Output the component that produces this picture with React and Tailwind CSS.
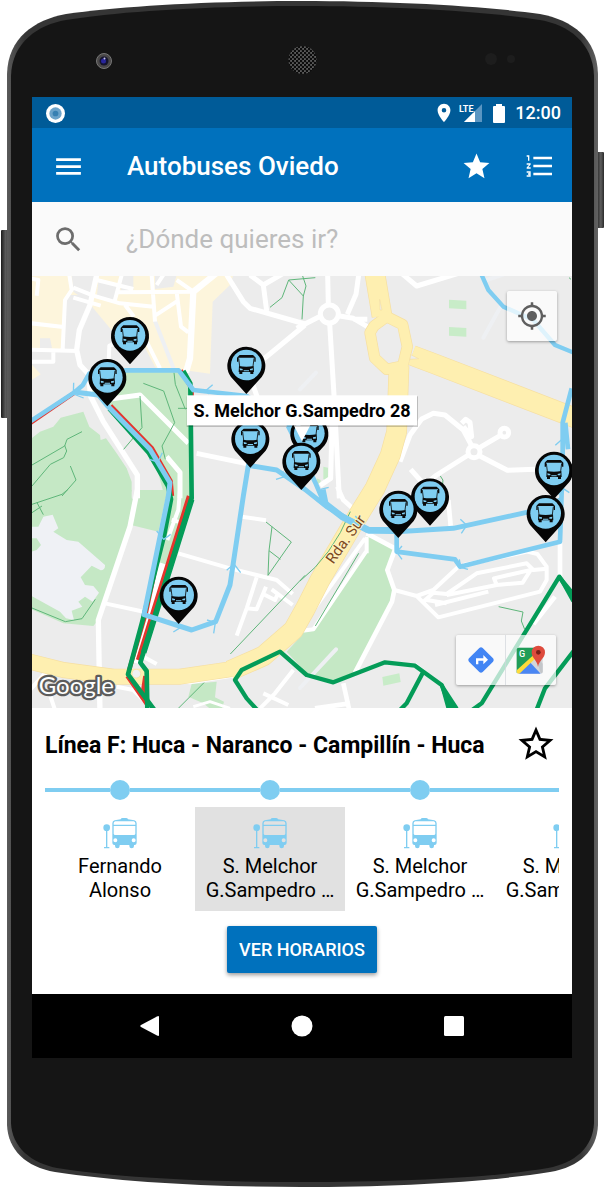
import React from "react";
import { MdMenu, MdStar, MdFormatListNumbered, MdSearch, MdPlace, MdMyLocation, MdStarBorder } from "react-icons/md";

const BLUE = "#7fcdf1";
const GREEN = "#049c58";

const stops = [
  { id: 1, name: "Fernando Alonso" },
  { id: 2, name: "S. Melchor G.Sampedro …" },
  { id: 3, name: "S. Melchor G.Sampedro …" },
  { id: 4, name: "S. Melchor G.Sampedro …" },
];

const pins = [
  [294, 178], [226, 304], [643, 267], [832, 472], [655, 488], [808, 555],
  [1194, 662], [1099, 699], [1566, 582], [1541, 712], [440, 957],
];

function PhoneBody() {
  return (
    <svg className="absolute inset-0 h-full w-full" viewBox="0 0 605 1188" preserveAspectRatio="none" aria-hidden="true">
      <defs>
        <linearGradient id="rim" x1="0" x2="1" y1="0" y2="0">
          <stop offset="0" stopColor="#5a5a5a" />
          <stop offset="0.03" stopColor="#353535" />
          <stop offset="0.97" stopColor="#353535" />
          <stop offset="1" stopColor="#626262" />
        </linearGradient>
        <linearGradient id="sideKey" x1="0" x2="1" y1="0" y2="0">
          <stop offset="0" stopColor="#1b1b1b" />
          <stop offset="0.6" stopColor="#5e5e5e" />
          <stop offset="1" stopColor="#2a2a2a" />
        </linearGradient>
        <pattern id="mesh" width="4" height="4" patternUnits="userSpaceOnUse">
          <rect width="4" height="4" fill="#5b5b5b" />
          <circle cx="1" cy="1" r="1.300" fill="#0c0c0c" />
          <circle cx="3" cy="3" r="1.300" fill="#0c0c0c" />
        </pattern>
      </defs>
      <rect x="1" y="230" width="8" height="188" rx="1" fill="url(#sideKey)" />
      <rect x="596" y="152" width="8" height="76" rx="1" fill="url(#sideKey)" />
      <path d="M301 1C210 1 120 6 66 14C34 20 8 38 7 74V1125C8 1150 26 1167 55 1172C120 1182 210 1187 301 1187S490 1182 550 1172C580 1167 597 1150 598 1125V74C597 38 572 20 540 14C484 6 392 1 301 1Z" fill="url(#rim)" />
      <path d="M301 6C210 6 120 11 66 20C38 25 12 42 11 76V1123C12 1147 31 1163 57 1168C120 1178 210 1182 301 1182S490 1178 548 1168C575 1163 593 1147 594 1123V76C593 42 568 25 540 20C484 11 392 6 301 6Z" fill="#151515" />
      <circle cx="104" cy="61" r="7.500" fill="#4a4848" stroke="#777" strokeWidth="1" />
      <circle cx="104" cy="61" r="4.500" fill="#15142e" />
      <circle cx="103.500" cy="61" r="2.500" fill="#28259a" />
      <circle cx="104.500" cy="58.500" r="1" fill="#c9c9f0" />
      <circle cx="302.500" cy="60" r="14" fill="url(#mesh)" />
      <circle cx="491" cy="59" r="6" fill="#1d1d1d" />
      <circle cx="511" cy="59" r="4" fill="#1d1d1d" />
    </svg>
  );
}

function Pin({ x, y }) {
  return (
    <g transform={`translate(${x} ${y})`}>
      <path d="M0 87L-46 36A57 57 0 1 1 46 36Z" fill="#050505" />
      <circle r="46" fill={BLUE} />
      <path d="M-20 -30H20Q24 -26 28 -22V-10H24V-22H-24V-10H-28V-22Q-24 -26 -20 -30Z" fill="#0b0b0b" />
      <path d="M-23 -20L-20 4M23 -20L20 4" stroke="#0b0b0b" strokeWidth="2.500" />
      <path d="M-22 3Q0 7 22 3L23 21H21V27H12V21H-12V27H-21V21H-23Z" fill="#0b0b0b" />
      <path d="M-20 10L-11 12V16H-19ZM20 10L11 12V16H19ZM-8 16H8V19H-8Z" fill={BLUE} />
    </g>
  );
}

function CityMap() {
  return (
    <svg className="block h-full w-full" viewBox="0 0 1620 1296" preserveAspectRatio="xMidYMid slice" role="img" aria-label="Mapa de paradas">
      <rect width="1620" height="1296" fill="#ececec" />

      {/* built-up areas and parks */}
      <g transform="translate(-6 -3)">
        <path d="M5 0H610L600 30L548 80L540 296L460 285H390L300 230L240 160L190 100L165 60H110L100 220L70 230L5 225Z" fill="#fdf5dc" />
        <path d="M125 0H195L180 85L130 50ZM205 20L262 25L252 80L200 70ZM275 0H310V45L272 50ZM375 0H440L430 35L375 42ZM30 190H60L66 220H30ZM240 215L330 190L380 285H240Z" fill="#ececec" />
        <path d="M5 268L32 298L5 315Z" fill="#fdf5dc" />
        <path d="M180 290H450L482 340L485 670H405L370 540L240 390L170 350Z" fill="#c5e8c5" />
        <path d="M5 490L30 470L70 455L92 428L160 410L178 455L210 480L212 495L228 490L260 535L290 580L305 620V670H5Z" fill="#c5e8c5" />
      </g>
      <g transform="translate(804 -3)">
        <path d="M447 74L499 77V103L447 100ZM447 156L499 159V185L447 182Z" fill="#c8ecc8" />
        <path d="M70 575L84 578V620L70 612ZM50 610L62 615V628L50 626Z" fill="#c8ecc8" />
      </g>
      <g transform="translate(-6 642)">
        <path d="M5 0H305L300 20L318 35L300 105L240 280L205 390L190 408L100 400L5 358Z" fill="#c5e8c5" />
        <path d="M320 0H412L385 125L303 105ZM430 0H480L400 250L345 350Z" fill="#c5e8c5" />
        <path d="M5 110H25L40 80L68 74L85 115L70 125L110 150L145 155L225 225Q226 240 212 241L185 227L152 262L165 285L190 288L207 308L188 335L165 320L145 335L157 350L125 362L132 390L108 385L90 365L5 318V185L20 180L33 165L20 145H5Z" fill="#eff1f5" />
        <path d="M485 582L560 575L555 622L582 635L575 660H545L520 640L475 620Z" fill="#c5e8c5" />
        <path d="M825 425L770 485L825 545Z" fill="#c5e8c5" />
      </g>
      <g transform="translate(804 642)">
        <path d="M200 135L285 180L260 240L282 300L272 350L165 545L95 575L0 545V430L40 415L200 190Z" fill="#c5e8c5" />
        <path d="M247 561L298 550L302 576L250 587Z" fill="#c8ecc8" />
      </g>

      {/* minor roads */}
      <g fill="none" stroke="#eef0f3" strokeWidth="12" strokeLinecap="round">
        <path d="M369 135L424 275M1354 185L1404 95M1364 12L1424 -8M804 340L852 290M804 1236L912 1120" />
      </g>
      <g fill="none" stroke="#fff" strokeLinejoin="round">
        <g transform="translate(-6 -3)" strokeWidth="12">
          <path d="M118 0L125 45L105 75L98 222M130 38L190 62L270 85L370 95M130 68L212 92M200 15L310 42M275 0L254 78M262 52L490 50M365 0L375 140M375 122L445 76M440 52L453 155L475 172M285 90L312 125M0 10L25 15L20 62M5 145L100 156M5 224L145 228M70 230V260H5M235 285L238 212L335 180M350 200L390 280M400 0L380 30M490 50L440 15" />
          <path d="M200 0L180 90L148 165L140 225L150 270L178 300L180 360L220 440L322 600V670" strokeWidth="16" />
          <path d="M565 -10L490 50L480 250L468 292" strokeWidth="19" />
          <path d="M590 0L640 80L660 100L825 147M660 0L700 30L710 108M700 30L760 -5M825 150L655 290L690 390M240 372L330 360L475 505M500 535L660 568M410 545L450 592V670" strokeWidth="15" />
        </g>
        <g transform="translate(804 -3)" strokeWidth="15">
          <path d="M83 0L85 90M89 145L102 360L118 670M96 450L92 610L60 632M-10 160L62 123M176 0L168 58L142 118M115 122L160 130L202 155M202 133H160M305 -5L350 33L485 -8" />
          <circle cx="88" cy="117" r="27" />
          <path d="M300 560L330 480L365 432L400 415L435 420L490 465L518 518M540 517L600 482M505 540L410 600L370 632M332 583L362 617M538 542L622 586L705 583M485 445L497 433L510 442L515 485L490 455" />
          <circle cx="522" cy="530" r="18" />
          <circle cx="613" cy="473" r="13" />
        </g>
        <g transform="translate(-6 642)" strokeWidth="12">
          <path d="M322 0L300 110L205 390L210 670" strokeWidth="16" />
          <path d="M635 80L708 91M445 190L600 235L740 270L788 312M225 340L345 366M680 262L650 355L620 437M650 355L680 358L708 290M695 310L735 330L745 308M788 345L725 298M450 0L445 60L430 100L412 150M425 90L445 95M340 500L380 522M0 600L50 545M55 600L75 660M790 540L735 610L690 655M700 610L775 645M260 590L310 600L370 660" />
          <path d="M370 568L480 578L610 558M490 650L540 635L600 655" strokeWidth="9" />
          <path d="M398 220L350 370L320 520" strokeWidth="22" />
        </g>
        <g transform="translate(804 642)" strokeWidth="12">
          <path d="M112 -10L130 30L175 70M200 130L286 176L262 240L283 300L276 335L165 548M130 580L150 670M45 655L150 640M445 30L452 108" strokeWidth="14" />
          <path d="M195 145L15 395M198 185L40 418L8 422M200 140V190" />
          <path d="M283 300L350 318L400 300L475 230M350 318L415 382L720 305L740 270V230L712 192L682 185L490 225M370 335L400 308L440 312L530 250L680 220L700 240L740 236M440 315L590 285L582 265L700 238M590 285L668 278L692 240M405 345L565 305M380 330L440 340" />
          <path d="M780 150V262M765 320L700 402M370 545L345 525" strokeWidth="14" />
        </g>
      </g>

      {/* main roads */}
      {[["#f6dfa2", 4], ["#feefb0", 0]].map(([color, extra]) => (
        <g key={color} fill="none" stroke={color} strokeLinejoin="round">
          <path strokeWidth={44 + extra} d="M-10 1156L94 1182L244 1202L444 1202L594 1180L694 1140" />
          <path strokeWidth={58 + extra} d="M594 1184L694 1140L784 1062L819 1000L864 912L964 742L1029 637L1075 537L1094 467L1101 270" />
          <path strokeWidth={58 + extra} d="M1029 -5L1050 120M1140 238L1204 262L1640 430" />
          <path strokeWidth={30 + extra} d="M1026 150L1064 122L1112 146L1126 212L1112 270L1064 280L1028 246L1014 170Z" />
        </g>
      ))}
      <path d="M1136 236L1160 248L1134 250ZM1043 70L1050 102H1044Z" fill="#ececec" stroke="#f6dfa2" strokeWidth="2" />
      <circle cx="313" cy="1193" r="13" fill="#f1f1f1" stroke="#f6dfa2" strokeWidth="2" />

      {/* footpaths */}
      <g fill="none" stroke="#5fb67a" strokeWidth="3">
        <path d="M334 322L395 345L428 440L390 510L400 550M324 360L330 455L275 520M426 290L430 325L460 400M438 397H465M0 567L98 510L105 490L150 467M0 630L55 565L95 545L104 525L98 508M115 570L132 612L90 660" />
        <path d="M714 94L750 65L770 12L814 60L810 130M770 12L850 5M814 60L822 30L812 0M1611 5L1617 10" />
        <path d="M0 685L90 655L108 640M0 710L30 690M15 680L34 716M0 996L100 1037L150 1028L190 970M702 738L778 798L708 898L711 824L745 850M720 752L711 824M819 898L595 1134M516 1220L440 1296M804 915Q900 840 955 707M980 832L850 1050M1400 992L1473 1008L1468 1035L1478 1060M1225 600Q1237 612 1232 625" />
      </g>

      {/* bus routes */}
      <g fill="none" strokeLinejoin="round">
        <g stroke="#e5352d" strokeWidth="13">
          <path d="M-4 440L126 351" />
          <path d="M236 389L360 517L416 615L420 660" />
          <path d="M395 760L342 1010L292 1180M286 1200L345 1285" />
          <path d="M471 660L318 1152M340 1200L334 1240L346 1270" />
          <path d="M446 283L479 338V400" />
        </g>
        <g stroke={GREEN} strokeWidth="14">
          <path d="M232 398L350 530L408 630L417 670L396 780L330 1040L288 1195L366 1300" />
          <path d="M454 285L475 322L479 667L325 1160L344 1185L346 1296" />
          <path d="M479 670L385 970L335 1130" strokeWidth="17" />
          <path d="M674 1300L644 1267L609 1212L629 1182L744 1127L824 1197L904 1219L1059 1159L1149 1169L1229 1227L1262 1310M1174 1187L1124 1282L1100 1306M1315 1306L1349 1282L1582 902L1625 965M1512 1306L1539 1237L1625 1125" strokeWidth="13" />
          <path d="M1582 902L1622 950V974ZM1229 1227L1248 1296H1274Z" fill={GREEN} strokeWidth="10" />
        </g>
        <g stroke={BLUE} strokeWidth="14">
          <path d="M-8 438L126 350L152 328L172 293L284 283H440L484 342L644 360L760 430L804 495" />
          <path d="M126 348L200 357L224 387L354 520L414 620L409 660L336 1016L479 1062L551 1037L594 927L634 660L649 568L734 582L819 640L884 692L1004 762L1094 767L1264 757L1494 707L1590 670" strokeWidth="15" />
          <path d="M860 668L930 722L1010 763H1100" strokeWidth="20" />
          <path d="M1094 770V827L1269 850L1284 872L1584 797L1586 740L1592 560V440L1619 337M1600 440L1608 520M768 450L804 520L850 620L880 690M874 640L884 690" />
          <path d="M1349 -3L1369 42L1414 92L1504 132L1569 207L1625 230" strokeWidth="13" />
          <path d="M125 320L124 354L155 366M542 326L520 345L532 354M352 550L378 558L391 530M732 610L758 602L752 585M374 765L395 790L416 775M424 1068L450 1052L430 1040M525 1032L550 1040L545 1072M584 883L606 864L626 890M970 720L992 748L965 752M1285 730L1304 748L1288 772M1110 810L1094 828L1110 850M1282 850L1286 874L1308 880M1570 508L1592 488L1612 508M1578 655L1594 638L1612 650M866 640L890 634" strokeWidth="4" />
        </g>
      </g>

      <text transform="translate(904 866) rotate(-54)" className="font-['Roboto']" fontSize="45" fill="#7d4a1e" stroke="#fff3c4" strokeWidth="5" paintOrder="stroke">
        Rda. Sur
      </text>

      {pins.map(([x, y]) => (
        <Pin key={`${x}-${y}`} x={x} y={y} />
      ))}

      <path d="M785 448L810 496L835 448Z" fill="#fff" />
      <rect x="464" y="361" width="694" height="92" fill="#000" opacity="0.2" />
      <rect x="465" y="358" width="690" height="90" fill="#fff" />
      <text x="810" y="424" textAnchor="middle" className="font-['Roboto'] font-bold" fontSize="54" fill="#000">
        S. Melchor G.Sampedro 28
      </text>

      <text x="20" y="1254" className="font-['Lato']" fontSize="72" fill="#fff" stroke="#5c5c5c" strokeWidth="14" strokeLinejoin="round" paintOrder="stroke">
        Google
      </text>
    </svg>
  );
}

function StopIcon() {
  return (
    <svg width="34" height="31" viewBox="0 0 102 93" fill={BLUE} aria-hidden="true">
      <circle cx="11" cy="29" r="10" />
      <path d="M9 36H13V87H19V91H3V87H9Z" />
      <path fillRule="evenodd" d="M53 4Q54 0 59 0H69Q74 0 75 4L94 7Q101 9 101 16V74Q101 80 96 81H93V84Q93 91 86 91Q79 91 79 84V81H50V84Q50 91 43 91Q36 91 36 84V81H33Q28 80 28 74V16Q28 9 35 7ZM37 10Q32 11 32 16V20H97V16Q97 11 92 10ZM32 24V47Q32 51 37 51H92Q97 51 97 47V24ZM37 61A6 6 0 1 0 37 73A6 6 0 1 0 37 61ZM92 61A6 6 0 1 0 92 73A6 6 0 1 0 92 61Z" />
    </svg>
  );
}

function StatusBar() {
  return (
    <div className="flex h-[31px] items-center bg-[#005b98] pt-px pr-[11px] pl-3.5 text-white">
      <svg width="19" height="19" viewBox="0 0 20 20" aria-hidden="true">
        <circle cx="10" cy="10" r="10" fill="#fff" />
        <circle cx="10" cy="10" r="6.500" fill="#6ba3ca" />
        <circle cx="10" cy="10" r="3" fill="#3780b2" />
      </svg>
      <div className="ml-auto flex items-center">
        <MdPlace size={22} />
        <svg className="ml-1" width="24" height="20" viewBox="0 0 24 20" aria-hidden="true">
          <path d="M23 1V19H5Z" fill="#5b96c2" />
          <path d="M16 8V19H5Z" fill="#fff" />
          <text x="0" y="9" className="font-['Roboto'] font-bold" fontSize="9" stroke="#005b98" strokeWidth="1" paintOrder="stroke" fill="#fff">LTE</text>
        </svg>
        <svg className="ml-2.5" width="12" height="19" viewBox="0 0 12 19" fill="#fff" aria-hidden="true">
          <path d="M3 0H9V2H11Q12 2 12 3V18Q12 19 11 19H1Q0 19 0 18V3Q0 2 1 2H3Z" />
        </svg>
        <span className="ml-2.5 text-[18px] leading-6 font-medium">12:00</span>
      </div>
    </div>
  );
}

export default function App() {
  const [selected, setSelected] = React.useState(2);
  return (
    <div className="relative min-h-screen bg-white pt-[97px] pr-[33px] pb-[130px] pl-8 font-['Roboto',sans-serif]">
      <PhoneBody />
      <main className="relative flex flex-col overflow-hidden bg-white">
        <StatusBar />
        <header className="flex h-[74px] items-center bg-[#0071bd] pt-0.5 pr-4 pl-5 text-white">
          <button type="button" aria-label="Menú"><MdMenu size={33} /></button>
          <h1 className="ml-[42px] flex-1 text-[26px] font-medium">Autobuses Oviedo</h1>
          <button type="button" aria-label="Favoritos"><MdStar size={31} /></button>
          <button type="button" aria-label="Líneas" className="ml-8"><MdFormatListNumbered size={32} /></button>
        </header>
        <div className="flex h-[74px] items-center bg-[#fafafa] pr-4 pl-5">
          <label htmlFor="destino" aria-label="Buscar destino" className="text-[#6d6d6d]"><MdSearch size={33} /></label>
          <input id="destino" type="text" placeholder="¿Dónde quieres ir?" className="ml-[41px] min-w-0 flex-1 bg-transparent text-[26px] text-gray-800 outline-none placeholder:text-[#bdbdbd]" />
        </div>

        <section className="relative h-[432px]">
          <CityMap />
          <button type="button" aria-label="Mi ubicación" className="absolute top-[15px] right-[15px] flex size-[50px] items-center justify-center rounded-xs bg-white/75 text-[#5f5f5f] shadow-[0_1px_3px_rgba(0,0,0,0.35)]">
            <MdMyLocation size={30} />
          </button>
          <div className="absolute right-4 bottom-[23px] flex rounded-xs bg-white/70 shadow-[0_1px_3px_rgba(0,0,0,0.35)]">
            <a href="#ruta" aria-label="Cómo llegar" className="flex size-[50px] items-center justify-center border-r border-gray-300/70">
              <svg width="26" height="26" viewBox="0 0 78 78" aria-hidden="true">
                <path d="M34 3Q39 -1 44 3L75 34Q79 39 75 44L44 75Q39 79 34 75L3 44Q-1 39 3 34Z" fill="#4285f4" />
                <path d="M24 52V34H46V24L60 38L46 52V41H31V52Z" fill="#fff" />
              </svg>
            </a>
            <a href="#maps" aria-label="Abrir Google Maps" className="flex size-[50px] items-center justify-center">
              <svg width="30" height="30" viewBox="0 0 90 90" aria-hidden="true">
                <path d="M8 8H72L80 16V80L72 86H8Q2 86 2 80V14Q2 8 8 8Z" fill="#d4d7da" />
                <path d="M8 8H60V32L2 84V14Q2 8 8 8Z" fill="#1f9d58" />
                <path d="M58 30L80 56V82Q80 86 74 85Z" fill="#c3c6ca" />
                <path d="M8 86L42 52L74 86Z" fill="#4a86f3" />
                <path d="M2 76L55 28L62 37L10 86Q2 86 2 80Z" fill="#fddb3a" />
                <path d="M66 66C64 46 47 40 47 22A20 20 0 0 1 87 22C87 40 69 46 66 66Z" fill="#de4b3d" />
                <circle cx="67" cy="22" r="7" fill="#7c1f17" />
                <text x="9" y="36" fontSize="27" fill="#fff" className="font-['Roboto'] font-medium">G</text>
              </svg>
            </a>
          </div>
        </section>

        <section className="flex flex-col px-[13px] pt-[15px] pb-[21px]">
          <div className="flex items-center justify-between">
            <h2 className="pt-1 text-[23px] leading-7 font-bold text-black">Línea F: Huca - Naranco - Campillín - Huca</h2>
            <button type="button" aria-label="Añadir a favoritos" className="mr-0.5"><MdStarBorder size={42} color="#000" /></button>
          </div>
          <ul className="mt-[15px] flex overflow-hidden">
            {stops.map((stop) => (
              <li key={stop.id} className="w-[150px] shrink-0">
                <div className="flex h-5 items-center">
                  <span className="h-1 flex-1 bg-[#7fcdf1]" />
                  <span className="size-5 rounded-full bg-[#7fcdf1]" />
                  <span className="h-1 flex-1 bg-[#7fcdf1]" />
                </div>
                <button
                  type="button"
                  onClick={() => setSelected(stop.id)}
                  className={`mt-[7px] flex w-full flex-col items-center px-2 pt-[11px] pb-[9px] text-black ${stop.id === selected ? "bg-[#e1e1e1]" : "bg-white"}`}
                >
                  <StopIcon />
                  <span className="mt-[5px] text-[20px] leading-6">{stop.name}</span>
                </button>
              </li>
            ))}
          </ul>
          <button type="button" className="mt-[15px] h-[47px] w-[150px] self-center rounded-xs bg-[#0071bd] text-[18px] font-medium text-white shadow-[0_2px_4px_rgba(0,0,0,0.4)]">
            VER HORARIOS
          </button>
        </section>

        <nav className="flex h-16 items-center justify-center gap-[130px] bg-black">
          <button type="button" aria-label="Atrás">
            <svg width="22" height="22" viewBox="0 0 22 22" fill="#fff"><path d="M18 1.500Q20 0.500 20 2V20Q20 21.500 18 20.500L2 12Q0.500 11 2 10Z" /></svg>
          </button>
          <button type="button" aria-label="Inicio">
            <svg width="22" height="22" viewBox="0 0 22 22" fill="#fff"><circle cx="11" cy="11" r="10.500" /></svg>
          </button>
          <button type="button" aria-label="Recientes">
            <svg width="22" height="22" viewBox="0 0 22 22" fill="#fff"><rect x="1" y="1" width="20" height="20" rx="1.500" /></svg>
          </button>
        </nav>
      </main>
    </div>
  );
}
